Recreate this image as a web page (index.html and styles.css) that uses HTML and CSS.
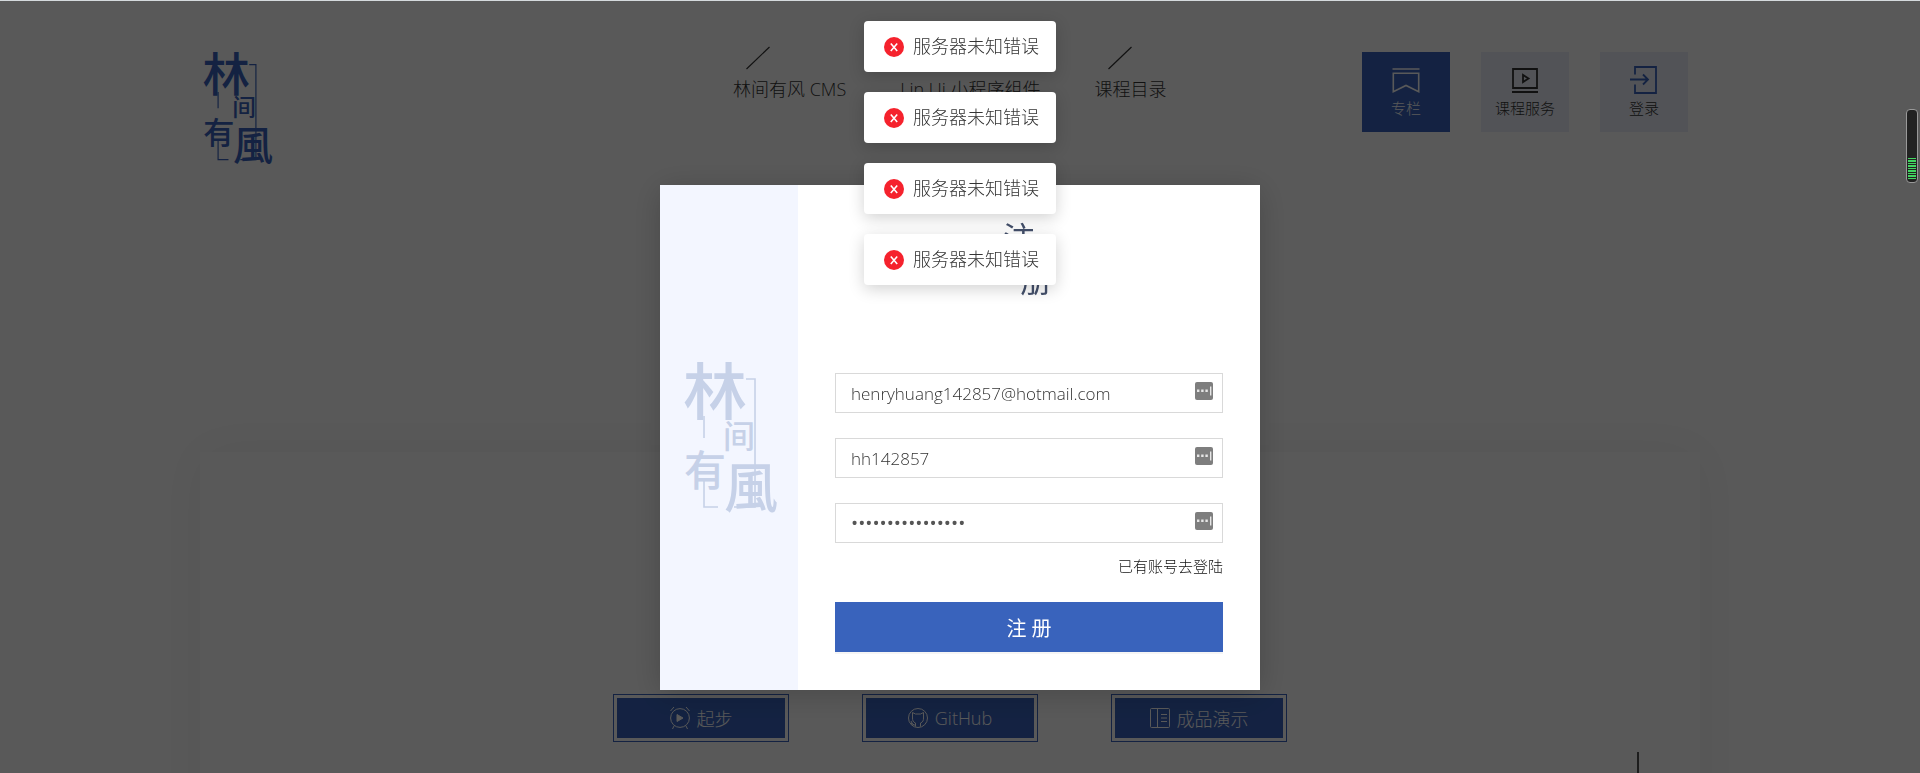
FILE: index.html
```html
<!DOCTYPE html>
<html lang="zh-CN">
<head>
<meta charset="utf-8">
<title>林间有风</title>
<link rel="stylesheet" href="styles.css">
</head>
<body>
<svg class="defs" aria-hidden="true">
  <symbol id="logo" viewBox="0 0 99 151" overflow="visible">
    <path d="M66 17h9v128H54M24 54v22M24 118v27h14" fill="none" stroke="currentColor" stroke-width="1.6"/>
    <g class="logo-text" fill="currentColor">
      <text x="3" y="52" font-size="64">林</text>
      <text x="43" y="86" font-size="32">间</text>
      <text x="4" y="124" font-size="42">有</text>
      <text x="44" y="146" font-size="54">風</text>
    </g>
  </symbol>
  <symbol id="error" viewBox="0 0 20 20">
    <circle cx="10" cy="10" r="10" fill="#f5222d"/>
    <path d="M6.8 6.500l6.400 7.400M13.200 6.500l-6.400 7.400" stroke="#fff" stroke-width="1.6"/>
  </symbol>
  <symbol id="keypad" viewBox="0 0 18 18">
    <rect width="18" height="18" rx="2" fill="#7e7e7e"/>
    <path d="M2 7.500h2.400v2.400H2zM6.200 7.500h2.400v2.400H6.200zM10.400 7.500h2.400v2.400h-2.400zM15 4.500h1.400v9H15z" fill="#e6e6e6"/>
  </symbol>
  <symbol id="slash" viewBox="0 0 24 24">
    <path d="M.5 23L23.500 1" stroke="currentColor" stroke-width="1.200"/>
  </symbol>
</svg>

<div class="page">
  <header class="header">
    <a class="brand" href="#" aria-label="林间有风"><svg class="brand-logo"><use href="#logo"/></svg></a>
    <nav class="nav">
      <a class="nav-item" href="#"><svg class="nav-slash"><use href="#slash"/></svg>林间有风 CMS</a>
      <a class="nav-item" href="#"><svg class="nav-slash"><use href="#slash"/></svg>Lin Ui 小程序组件</a>
      <a class="nav-item" href="#"><svg class="nav-slash"><use href="#slash"/></svg>课程目录</a>
    </nav>
    <div class="tiles">
      <a class="tile tile-primary" href="#">
        <svg class="tile-icon" viewBox="0 0 28 28" fill="none" stroke="currentColor" stroke-width="1.600"><path d="M.5 3h27M1.300 7.300h25.400v18.500L14 19.500 1.300 25.800z"/></svg>
        专栏
      </a>
      <a class="tile" href="#">
        <svg class="tile-icon" viewBox="0 0 28 28" fill="none" stroke="currentColor" stroke-width="1.800"><path d="M2 3h24v19H2zM1 26h26M12 9v7l5.500-3.500z"/></svg>
        课程服务
      </a>
      <a class="tile" href="#">
        <svg class="tile-icon tile-icon-blue" viewBox="0 0 28 28" fill="none" stroke="currentColor" stroke-width="1.800"><path d="M5 8.500V1h21v26H5v-8.500M0 13.500h18M13 8.500l5 5-5 5"/></svg>
        登录
      </a>
    </div>
  </header>

  <main class="card">
    <div class="actions">
      <a class="action" href="#"><span class="action-body">
        <svg class="action-icon" viewBox="0 0 20 24" fill="none" stroke="currentColor"><circle cx="10" cy="12" r="9.400"/><path d="M.5 5L4 1M19.500 5L16 1M4 20l-1.500 3M16 20l1.500 3"/><path d="M7 8.500v7l6-3.500z" fill="currentColor"/></svg>
        起步</span></a>
      <a class="action" href="#"><span class="action-body">
        <svg class="action-icon" viewBox="0 0 20 24" fill="none" stroke="currentColor"><circle cx="10" cy="12" r="9.500"/><path d="M7.500 20.500V17C5 16 4.500 14.500 4.500 12V6.500L7.500 8h5l3-1.500V12c0 2.500-.5 4-3 5v3.500M3 15l1.500 3 3 1.500M3 17l2 3"/></svg>
        GitHub</span></a>
      <a class="action" href="#"><span class="action-body">
        <svg class="action-icon" viewBox="0 0 20 24" fill="none" stroke="currentColor"><rect x=".5" y="2.500" width="19" height="19" rx="1"/><path d="M7.500 2.500v19M11 8.500h6M11 12h6M11 15.500h6"/></svg>
        成品演示</span></a>
    </div>
    <div class="rule-row"><i class="rule"></i></div>
  </main>
</div>

<div class="overlay">
  <section class="modal" role="dialog" aria-label="注册">
    <aside class="modal-side"><svg class="side-logo"><use href="#logo"/></svg></aside>
    <form class="form">
      <h1 class="title"><span>注</span><span class="title-low">册</span></h1>
      <div class="fields">
        <div class="field"><input type="text" aria-label="邮箱" value="henryhuang142857@hotmail.com"><svg class="keypad"><use href="#keypad"/></svg></div>
        <div class="field"><input type="text" aria-label="昵称" value="hh142857"><svg class="keypad"><use href="#keypad"/></svg></div>
        <div class="field"><input class="secret" type="password" aria-label="密码" value="abcdefgh12345678"><svg class="keypad"><use href="#keypad"/></svg></div>
      </div>
      <a class="to-login" href="#">已有账号去登陆</a>
      <button class="submit" type="button">注 册</button>
    </form>
  </section>
</div>

<div class="toasts">
  <div class="toast"><svg class="toast-icon"><use href="#error"/></svg>服务器未知错误</div>
  <div class="toast"><svg class="toast-icon"><use href="#error"/></svg>服务器未知错误</div>
  <div class="toast"><svg class="toast-icon"><use href="#error"/></svg>服务器未知错误</div>
  <div class="toast"><svg class="toast-icon"><use href="#error"/></svg>服务器未知错误</div>
</div>

<div class="gauge"><div class="gauge-level"></div></div>
</body>
</html>
```
FILE: styles.css
```css
* { box-sizing: border-box; }

body {
  margin: 0;
  height: 100vh;
  overflow: hidden;
  background: #fff;
  color: #333;
  font-family: "Open Sans", "Noto Sans CJK SC", sans-serif;
  font-size: 18px;
  font-weight: 300;
}

a { color: inherit; text-decoration: none; }
svg { display: block; flex: none; }
.defs { position: absolute; width: 0; height: 0; }
.logo-text { font-family: "KaiTi", "Noto Sans CJK SC", sans-serif; font-weight: 500; }

/* Page under the mask */
.page { height: 100vh; padding-right: 20px; overflow: hidden; }

.header {
  display: flex;
  justify-content: space-between;
  max-width: 1500px;
  height: 452px;
  margin: 0 auto;
}
.brand { width: 533px; padding-top: 52px; color: #3963bc; }
.brand-logo { width: 74px; height: 112px; }

.nav { display: flex; gap: 54px; padding-top: 46px; flex: 1; line-height: 26px; white-space: nowrap; }
.nav-item { display: flex; flex-direction: column; gap: 6px; }
.nav-slash { width: 24px; height: 24px; margin-left: 13px; }

.tiles { display: flex; gap: 31px; padding: 52px 12px 0 0; }
.tile {
  display: flex;
  flex-direction: column;
  align-items: center;
  gap: 3px;
  width: 88px;
  height: 80px;
  padding-top: 14px;
  background: #eaeef8;
  font-size: 15px;
  line-height: 22px;
}
.tile-primary { background: #3963bc; color: #fff; }
.tile-icon { width: 28px; height: 28px; }
.tile-icon-blue { color: #3963bc; }

.card {
  max-width: 1500px;
  height: 400px;
  margin: 0 auto;
  padding-top: 242px;
  background: #fff;
  box-shadow: 0 0 50px rgba(0, 0, 0, .06);
}
.actions { display: flex; justify-content: center; gap: 73px; }
.action { width: 176px; padding: 3px; border: 1px solid #3963bc; }
.action-body {
  display: flex;
  align-items: center;
  justify-content: center;
  gap: 7px;
  height: 40px;
  background: #3963bc;
  color: #fff;
}
.action-icon { width: 20px; height: 24px; }
.rule-row { display: flex; justify-content: flex-end; padding: 10px 61px 0 0; }
.rule { width: 2px; height: 40px; background: #555; }

/* Register dialog */
.overlay {
  position: fixed;
  inset: 0;
  display: flex;
  align-items: flex-start;
  justify-content: center;
  padding-top: 184px;
  border-top: 1px solid #d5dadd;
  background: rgba(0, 0, 0, .65);
  background-clip: padding-box;
}
.modal {
  display: flex;
  width: 600px;
  max-width: 90%;
  background: #fff;
  box-shadow: 0 4px 30px rgba(0, 0, 0, .2);
}
.modal-side {
  display: flex;
  align-items: center;
  justify-content: center;
  width: 138px;
  background: #f3f6ff;
  color: #c6d1e8;
}
.side-logo { width: 99px; height: 151px; }

.form { display: flex; flex: 1; flex-direction: column; padding: 30px 37px 38px; }
.title {
  display: flex;
  flex-direction: column;
  align-items: center;
  height: 158px;
  margin: 0;
  color: #44506b;
  font-family: "KaiTi", "Noto Sans CJK SC", sans-serif;
  font-size: 32px;
  font-weight: 400;
  line-height: 42px;
}
.title span { margin-right: 20px; }
.title .title-low { margin-right: -14px; }

.fields { display: flex; flex-direction: column; gap: 25px; }
.field { position: relative; }
.field input {
  display: block;
  width: 100%;
  height: 40px;
  padding: 0 40px 0 15px;
  border: 1px solid #d9d9d9;
  border-radius: 0;
  background: #fff;
  color: #333;
  font: inherit;
  font-size: 17px;
}
.field .secret { color: #555; font-size: 19px; font-weight: 400; }
.keypad { position: absolute; top: 9px; right: 10px; width: 18px; height: 18px; }

.to-login { align-self: flex-end; margin: 12px 0 25px; color: #111; font-size: 15px; line-height: 22px; }
.submit {
  height: 50px;
  border: 0;
  background: #3963bc;
  box-shadow: 0 2px 0 rgba(0, 0, 0, .04);
  color: #fff;
  font: inherit;
  font-size: 20px;
  font-weight: 400;
}

/* Message stack */
.toasts {
  position: fixed;
  top: 21px;
  left: 0;
  right: 0;
  display: flex;
  flex-direction: column;
  align-items: center;
  gap: 20px;
}
.toast {
  display: flex;
  align-items: center;
  gap: 9px;
  padding: 12px 17px 12px 20px;
  border-radius: 4px;
  background: #fff;
  box-shadow: 0 4px 16px rgba(0, 0, 0, .18);
  color: #333;
  line-height: 27px;
}
.toast-icon { width: 20px; height: 20px; }

/* Level gauge at the window edge */
.gauge {
  position: fixed;
  top: 109px;
  right: 2px;
  display: flex;
  flex-direction: column;
  justify-content: flex-end;
  width: 12px;
  height: 74px;
  padding: 0 1px 3px;
  border: 1px solid #999;
  border-radius: 4px;
  background: #222;
}
.gauge-level {
  height: 21px;
  background: repeating-linear-gradient(#41d660 0 1px, #222 1px 2px, #41d660 2px 4px, #222 4px 5px);
}
```
